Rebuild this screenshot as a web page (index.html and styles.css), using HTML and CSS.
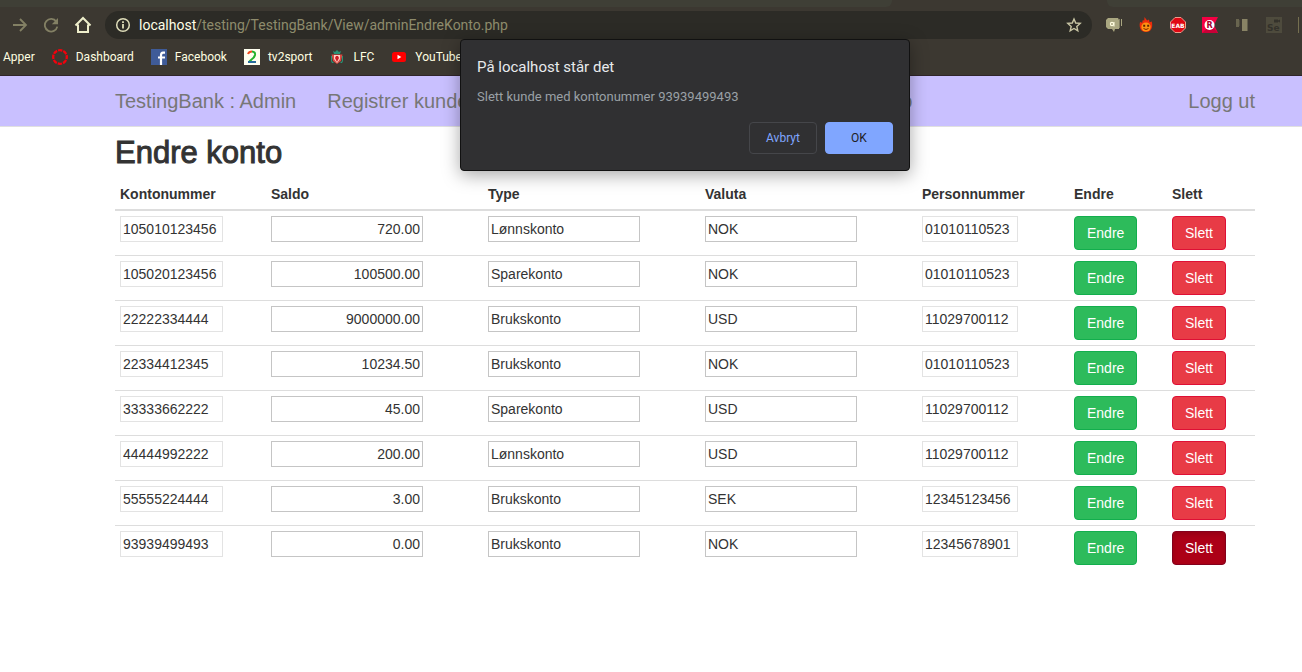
FILE: index.html
```html
<!DOCTYPE html>
<html lang="no">
<head>
<meta charset="utf-8">
<title>Endre konto</title>
<link rel="stylesheet" href="styles.css">
</head>
<body>
<header class="browser">
  <div class="tabs"><span class="tab tab-left"></span><span class="tab tab-right"></span></div>
  <div class="toolbar">
    <div class="tools">
      <button class="tool" aria-label="Frem"><svg width="16" height="16" viewBox="0 0 16 16" fill="none" stroke="#838064" stroke-width="1.8"><path d="M1 8h13M8 2l6 6-6 6"/></svg></button>
      <button class="tool" aria-label="Last inn på nytt"><svg width="16" height="16" viewBox="0 0 16 16"><path d="M13.3 4.6A6.3 6.3 0 1 0 14.3 9.6" fill="none" stroke="#838064" stroke-width="1.8"/><path d="M15 1v6.2H8.8z" fill="#838064"/></svg></button>
      <button class="tool" aria-label="Startside"><svg width="18" height="18" viewBox="0 0 18 18" fill="none" stroke="#eeeecb" stroke-width="2"><path d="M1.5 9.5L9 2l7.500 7.500M4 8.500V16h10V8.500"/></svg></button>
    </div>
    <div class="address">
      <svg width="16" height="16" viewBox="0 0 16 16"><circle cx="8" cy="8" r="6.300" fill="none" stroke="#deddb9" stroke-width="1.500"/><path d="M8 7v4.500M8 4.200v1.700" stroke="#deddb9" stroke-width="1.800"/></svg>
      <span class="url"><span class="host">localhost</span>/testing/TestingBank/View/adminEndreKonto.php</span>
      <button class="tool" aria-label="Legg til bokmerke"><svg width="16" height="16" viewBox="0 0 16 16" fill="none" stroke="#c9c6a5" stroke-width="1.400"><path d="M8 2l1.700 4 4.500.4-3.400 3 1 4.400L8 11.500l-3.800 2.300 1-4.400-3.400-3 4.500-.4z"/></svg></button>
    </div>
    <div class="extensions">
      <svg width="16" height="16" viewBox="0 0 16 16"><path d="M2 1h10l1 2v9H9l-1 3-2-3H2l-2-2V3z" fill="#aaa781"/><path d="M13 2h1v9h-1z" fill="#817e62"/><path d="M15 2h1v7h-1z" fill="#aaa781"/><circle cx="6" cy="7" r="1.600" fill="none" stroke="#fffde0" stroke-width="1.200"/><path d="M8 5v4.500" stroke="#fffde0"/></svg>
      <svg width="16" height="16" viewBox="0 0 16 16"><path d="M6.500 0l2.600 3.500L11 2.600l.5 2.600 2.300-.7C15.500 12 12 15 8 15S.5 12 2 5l2.200.7.5-2.500 1.600.4z" fill="#ee2c0b"/><ellipse cx="8" cy="10" rx="4.700" ry="4.500" fill="#ff9312"/><path d="M5.200 7.800h2v2h-2zM9.200 7.800h2v2h-2z" fill="#5d2500"/><path d="M5.500 11.500q2.500 2 5 0" stroke="#7b2600" fill="none"/></svg>
      <svg width="16" height="16" viewBox="0 0 16 16"><path d="M5 .5h6L15.500 5v6L11 15.500H5L.5 11V5z" fill="#e00712" stroke="#ed9b8c"/><text x="8" y="10.500" class="mark-eab">EAB</text></svg>
      <svg width="16" height="16" viewBox="0 0 16 16"><path d="M0 0h16l-4 8 4 8H0z" fill="#f50043"/><path d="M0 16L9 8l7 8z" fill="#c90037"/><circle cx="7.500" cy="8" r="5" fill="#fff"/><text x="7.500" y="11" class="mark-r">R</text></svg>
      <svg width="16" height="16" viewBox="0 0 16 16"><path d="M2 2h3v8H2z" fill="#69654f"/><path d="M5 3h1v6H5z" fill="#4e4b3d"/><path d="M8 2h5v12H8z" fill="#898365"/><path d="M13 2h1v12h-1z" fill="#625e4b"/></svg>
      <svg width="16" height="16" viewBox="0 0 16 16"><path d="M0 0h16v16H0z" fill="#4e4b3d"/><path d="M8 2.500h4v1l2-1v3l-2-1v1H8z" fill="#34322b"/><text x="1" y="14" class="mark-se">Se</text></svg>
      <span class="divider"></span>
    </div>
  </div>
  <nav class="bookmarks" aria-label="Bokmerker">
    <a href="#">Apper</a>
    <a href="#"><svg width="16" height="16" viewBox="0 0 16 16"><circle cx="8" cy="8" r="6.800" fill="none" stroke="#f4000c" stroke-width="2.300" stroke-dasharray="4.340 1" stroke-dashoffset="2.170"/></svg>Dashboard</a>
    <a href="#"><svg width="16" height="16" viewBox="0 0 16 16"><path d="M0 0h16v16H0z" fill="#3f5b98"/><path d="M10 16V6.500Q10 3.700 12 3.700h2M7 8.500h7" fill="none" stroke="#fff" stroke-width="2.200"/></svg>Facebook</a>
    <a href="#"><svg width="16" height="16" viewBox="0 0 16 16"><path d="M0 0h16v16H0z" fill="#fffff0"/><path d="M4 5q1-2.500 4-2.500" fill="none" stroke="#f04a20" stroke-width="2"/><path d="M8 2.500q3.500.2 3 3.500-.5 2.500-3.500 4.500L5 13" fill="none" stroke="#24b22b" stroke-width="2"/><path d="M4 13h8" stroke="#276c9c" stroke-width="2"/></svg>tv2sport</a>
    <a href="#"><svg width="16" height="16" viewBox="0 0 16 16"><path d="M4 2l2 1 2-2 2 2 2-1-1 3H5z" fill="#279477"/><path d="M2.500 5.500h11L12 12l-4 3-4-3z" fill="#d94b43"/><path d="M5 6h6v4l-3 4-3-4z" fill="#ffd1c6"/><path d="M7 7h2l1 2-2 4-2-4z" fill="#cc1d25"/><path d="M2 7h1v5l2 2H3l-1-2zM13 7h1v5l-1 2h-2l2-2z" fill="#279477"/></svg>LFC</a>
    <a href="#"><svg width="16" height="16" viewBox="0 0 16 16"><rect x="1" y="3" width="14" height="10" rx="2.500" fill="#f00"/><path d="M6.500 5.800L10.300 8l-3.800 2.200z" fill="#fff"/></svg>YouTube</a>
  </nav>
</header>

<nav class="navbar">
  <div class="container nav-row">
    <a href="#" class="brand">TestingBank : Admin</a>
    <a href="#">Registrer kunde</a>
    <a href="#">Endre kunde</a>
    <a href="#">Registrer konto</a>
    <a href="#">Endre konto</a>
    <a href="#" class="logout">Logg ut</a>
  </div>
</nav>

<main class="container">
  <h2>Endre konto</h2>
  <table class="accounts">
    <colgroup><col class="c-account"><col class="c-wide"><col class="c-wide"><col class="c-wide"><col class="c-person"><col class="c-edit"><col class="c-delete"></colgroup>
    <thead><tr><th>Kontonummer</th><th>Saldo</th><th>Type</th><th>Valuta</th><th>Personnummer</th><th>Endre</th><th>Slett</th></tr></thead>
    <tbody>
      <tr><td><input class="fixed account" aria-label="Kontonummer" readonly value="105010123456"></td><td><input class="amount" aria-label="Saldo" value="720.00"></td><td><input aria-label="Type" value="Lønnskonto"></td><td><input aria-label="Valuta" value="NOK"></td><td><input class="fixed person" aria-label="Personnummer" readonly value="01010110523"></td><td><button class="btn edit">Endre</button></td><td><button class="btn delete">Slett</button></td></tr>
      <tr><td><input class="fixed account" aria-label="Kontonummer" readonly value="105020123456"></td><td><input class="amount" aria-label="Saldo" value="100500.00"></td><td><input aria-label="Type" value="Sparekonto"></td><td><input aria-label="Valuta" value="NOK"></td><td><input class="fixed person" aria-label="Personnummer" readonly value="01010110523"></td><td><button class="btn edit">Endre</button></td><td><button class="btn delete">Slett</button></td></tr>
      <tr><td><input class="fixed account" aria-label="Kontonummer" readonly value="22222334444"></td><td><input class="amount" aria-label="Saldo" value="9000000.00"></td><td><input aria-label="Type" value="Brukskonto"></td><td><input aria-label="Valuta" value="USD"></td><td><input class="fixed person" aria-label="Personnummer" readonly value="11029700112"></td><td><button class="btn edit">Endre</button></td><td><button class="btn delete">Slett</button></td></tr>
      <tr><td><input class="fixed account" aria-label="Kontonummer" readonly value="22334412345"></td><td><input class="amount" aria-label="Saldo" value="10234.50"></td><td><input aria-label="Type" value="Brukskonto"></td><td><input aria-label="Valuta" value="NOK"></td><td><input class="fixed person" aria-label="Personnummer" readonly value="01010110523"></td><td><button class="btn edit">Endre</button></td><td><button class="btn delete">Slett</button></td></tr>
      <tr><td><input class="fixed account" aria-label="Kontonummer" readonly value="33333662222"></td><td><input class="amount" aria-label="Saldo" value="45.00"></td><td><input aria-label="Type" value="Sparekonto"></td><td><input aria-label="Valuta" value="USD"></td><td><input class="fixed person" aria-label="Personnummer" readonly value="11029700112"></td><td><button class="btn edit">Endre</button></td><td><button class="btn delete">Slett</button></td></tr>
      <tr><td><input class="fixed account" aria-label="Kontonummer" readonly value="44444992222"></td><td><input class="amount" aria-label="Saldo" value="200.00"></td><td><input aria-label="Type" value="Lønnskonto"></td><td><input aria-label="Valuta" value="USD"></td><td><input class="fixed person" aria-label="Personnummer" readonly value="11029700112"></td><td><button class="btn edit">Endre</button></td><td><button class="btn delete">Slett</button></td></tr>
      <tr><td><input class="fixed account" aria-label="Kontonummer" readonly value="55555224444"></td><td><input class="amount" aria-label="Saldo" value="3.00"></td><td><input aria-label="Type" value="Brukskonto"></td><td><input aria-label="Valuta" value="SEK"></td><td><input class="fixed person" aria-label="Personnummer" readonly value="12345123456"></td><td><button class="btn edit">Endre</button></td><td><button class="btn delete">Slett</button></td></tr>
      <tr><td><input class="fixed account" aria-label="Kontonummer" readonly value="93939499493"></td><td><input class="amount" aria-label="Saldo" value="0.00"></td><td><input aria-label="Type" value="Brukskonto"></td><td><input aria-label="Valuta" value="NOK"></td><td><input class="fixed person" aria-label="Personnummer" readonly value="12345678901"></td><td><button class="btn edit">Endre</button></td><td><button class="btn delete pressed">Slett</button></td></tr>
    </tbody>
  </table>
</main>

<section class="prompt" role="alertdialog" aria-labelledby="prompt-title" aria-describedby="prompt-text">
  <h1 id="prompt-title">På localhost står det</h1>
  <p id="prompt-text">Slett kunde med kontonummer 93939499493</p>
  <div class="prompt-actions"><button class="cancel">Avbryt</button><button class="ok">OK</button></div>
</section>
</body>
</html>
```

FILE: styles.css
```css
* { box-sizing: border-box; }
body {
  margin: 0;
  background: #fff;
  color: #333;
  font: 14px/20px "Liberation Sans", Arial, sans-serif;
}
a { color: inherit; text-decoration: none; }
svg { display: block; flex: none; }
button, input { font: inherit; }

.browser {
  background: #3c3831;
  border-bottom: 1px solid #30252a;
  font-family: Roboto, sans-serif;
}
.tabs { display: flex; justify-content: space-between; height: 7px; }
.tab { background: #3f3f36; }
.tab-left { width: 68.5%; border-bottom-right-radius: 6px; }
.tab-right { width: 15%; border-bottom-left-radius: 6px; }
.toolbar { display: flex; align-items: center; padding-top: 4px; }
.tools { display: flex; align-items: center; gap: 15px; width: 105px; padding-left: 12px; }
.tool { display: block; padding: 0; border: 0; background: none; }
.address {
  display: flex;
  flex: 1;
  align-items: center;
  gap: 8px;
  height: 28px;
  padding: 0 10px;
  border-radius: 14px;
  background: #2c2b26;
  color: #8e8b6c;
}
.url { flex: 1; font-size: 14px; }
.host { color: #ffffe6; }
.extensions { display: flex; align-items: center; gap: 16px; padding: 0 3px 0 14px; }
.divider { width: 1px; height: 16px; background: #756f50; }
.mark-eab { font: bold 6px "DejaVu Sans", sans-serif; fill: #fff; text-anchor: middle; }
.mark-r { font: bold 8px "DejaVu Sans", sans-serif; fill: #a3002b; text-anchor: middle; }
.mark-se { font: bold 9px "DejaVu Sans", sans-serif; fill: #34322b; }
.bookmarks {
  display: flex;
  gap: 17px;
  height: 36px;
  padding-left: 3px;
  color: #ffffe1;
  font-size: 12px;
}
.bookmarks a { display: flex; align-items: center; gap: 8px; }

.container { margin: 0 47px 0 115px; }
.navbar { background: #c9c0ff; border-bottom: 1px solid #e0e0e0; }
.nav-row {
  display: flex;
  gap: 29px;
  align-items: center;
  height: 50px;
  color: #777;
  font-size: 20px;
  white-space: nowrap;
}
.brand { margin-right: 2px; }
.logout { margin-left: auto; }

h2 {
  margin: 9px 0 10px;
  font-size: 31px;
  font-weight: 500;
  line-height: 33px;
  -webkit-text-stroke: 1px #333;
}
.accounts { width: 100%; table-layout: fixed; border-spacing: 0; }
.c-account { width: 151px; }
.c-wide { width: 217px; }
.c-person { width: 152px; }
.c-edit { width: 98px; }
.c-delete { width: 88px; }
th { padding: 5px; border-bottom: 2px solid #ddd; text-align: left; }
td { padding: 5px; border-top: 1px solid #ddd; vertical-align: top; }
tbody tr:first-child td { border-top: 0; }
td input {
  display: block;
  width: 152px;
  height: 26px;
  padding: 1px 2px;
  border: 1px solid #c5c5c5;
  background: #fff;
  color: #333;
}
td .fixed { border-color: #e3e3e3; }
td .account { width: 103px; }
td .person { width: 96px; }
td .amount { text-align: right; }
.btn {
  display: block;
  padding: 6px 12px;
  border: 1px solid;
  border-radius: 4px;
  color: #fff;
}
.edit { background: #2dbb5b; border-color: #12ae4d; }
.delete { background: #e83b46; border-color: #df0f35; }
.pressed {
  background: #ac0017;
  border-color: #83001c;
  box-shadow: inset 0 3px 5px rgba(0, 0, 0, .125);
}

.prompt {
  position: absolute;
  top: 39px;
  left: 460px;
  width: 450px;
  padding: 17px 16px 16px;
  border: 1px solid #111;
  border-radius: 4px;
  background: #303032;
  box-shadow: 0 4px 18px rgba(0, 0, 0, .35);
  font-family: Roboto, sans-serif;
}
.prompt h1 { margin: 0; color: #e8eaed; font-size: 15px; font-weight: 400; line-height: 20px; }
.prompt p { margin: 10px 0 15px; color: #9aa0a6; font-size: 13px; }
.prompt-actions { display: flex; justify-content: flex-end; gap: 8px; }
.prompt-actions button {
  width: 68px;
  height: 32px;
  padding: 0;
  border: 1px solid #45464a;
  border-radius: 4px;
  background: none;
  color: #80a6ff;
  font-size: 12px;
}
.prompt-actions .ok { border-color: #80a6ff; background: #80a6ff; color: #202124; }
```
